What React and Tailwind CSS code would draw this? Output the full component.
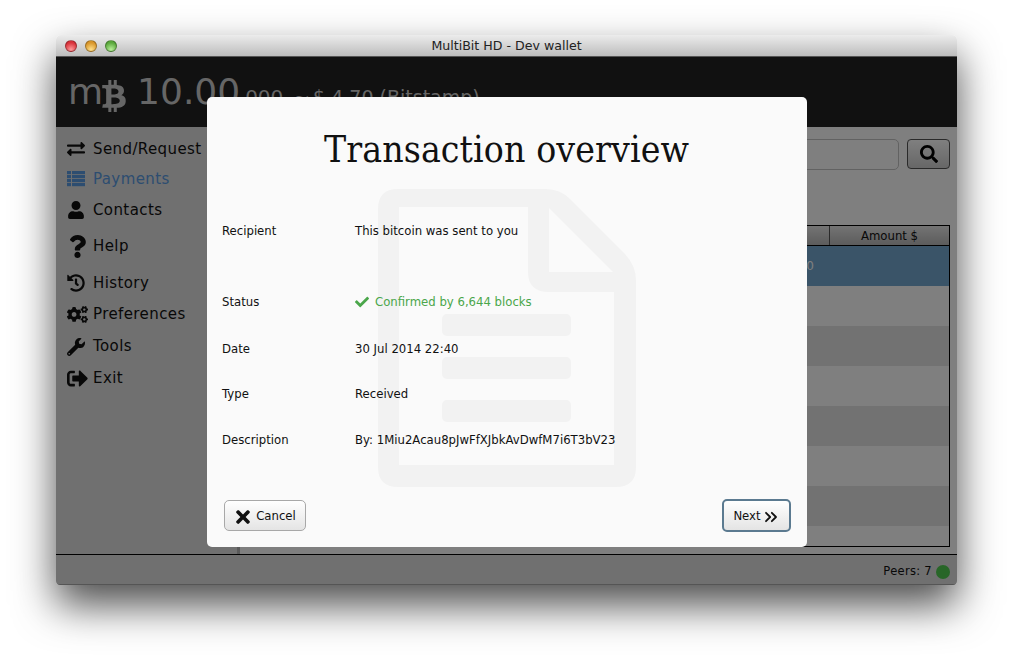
import React from 'react';
import {
  FaBtc,
  FaCheck,
  FaCogs,
  FaExchangeAlt,
  FaHistory,
  FaQuestion,
  FaSearch,
  FaSignOutAlt,
  FaTimes,
  FaUser,
  FaWrench,
} from 'react-icons/fa';
import { ChevronsRight } from 'lucide-react';

const ui = "font-['DejaVu_Sans',sans-serif]";

function PaymentsIcon() {
  return (
    <svg width="18" height="16" viewBox="0 0 18 16" fill="currentColor">
      {[0, 4, 8, 12].map((y) => (
        <g key={y}>
          <rect x="0" y={y} width="4" height="3.2" />
          <rect x="5" y={y} width="13" height="3.2" />
        </g>
      ))}
    </svg>
  );
}

const navItems = [
  { label: 'Send/Request', icon: <FaExchangeAlt size={18} />, rowClass: 'h-[30px]' },
  { label: 'Payments', icon: <PaymentsIcon />, rowClass: 'h-[30px] text-[#5a9be0]' },
  { label: 'Contacts', icon: <FaUser size={18} />, rowClass: 'h-[32px]' },
  { label: 'Help', icon: <FaQuestion size={23} className="-ml-[1px]" />, rowClass: 'h-[41px]' },
  { label: 'History', icon: <FaHistory size={18} />, rowClass: 'h-[32px]' },
  { label: 'Preferences', icon: <FaCogs size={21} />, rowClass: 'h-[31px]' },
  { label: 'Tools', icon: <FaWrench size={18} />, rowClass: 'h-[33px]' },
  { label: 'Exit', icon: <FaSignOutAlt size={21} />, rowClass: 'h-[31px]' },
];

const details = [
  { label: 'Recipient', value: 'This bitcoin was sent to you', rowClass: 'h-[71px]' },
  { label: 'Status', value: 'Confirmed by 6,644 blocks', rowClass: 'h-[47px]', status: true },
  { label: 'Date', value: '30 Jul 2014 22:40', rowClass: 'h-[45px]' },
  { label: 'Type', value: 'Received', rowClass: 'h-[46px]' },
  { label: 'Description', value: 'By: 1Miu2Acau8pJwFfXJbkAvDwfM7i6T3bV23', rowClass: 'h-[20px]' },
];

function Light({ className }) {
  return <div className={`w-3 h-3 rounded-full border border-black/30 ${className}`} />;
}

function Sidebar() {
  return (
    <div className="w-[184px] shrink-0 bg-[#e0e0e0] border-r-[3px] border-[#b4b4b4] pt-[7px] pl-[11px]">
      {navItems.map(({ label, icon, rowClass }) => (
        <div key={label} className={`flex items-center text-[15px] tracking-[0.4px] ${rowClass}`}>
          <div className="w-[26px] flex justify-start">{icon}</div>
          <span>{label}</span>
        </div>
      ))}
    </div>
  );
}

function PaymentsPanel() {
  return (
    <div className="flex-1 min-w-0 pl-[12px] pr-[7px] pt-[12px] bg-white">
      <div className="flex justify-end gap-2">
        <div className="w-[400px] h-[31px] rounded-[5px] border border-[#c4c4c4] bg-white" />
        <div className="w-[43px] h-[30px] rounded-[4px] border border-[#555] bg-gradient-to-b from-[#fff] to-[#cfcfcf] flex items-center justify-center">
          <FaSearch size={18} className="text-black" />
        </div>
      </div>
      <div className="mt-[55px] h-[322px] border border-black overflow-hidden">
        <div className="h-[20px] flex justify-end border-b border-black bg-gradient-to-b from-[#e8e8e8] to-[#b8b8b8] text-[11.7px]">
          <div className="w-[120px] border-l border-[#555] pt-[2px] flex items-center justify-center">Amount $</div>
        </div>
        <div className="h-[40px] bg-[#74a8d0] flex items-center justify-end pr-[135px] text-[12px] text-white">4.70</div>
        {[0, 1, 2, 3, 4, 5].map((i) => (
          <div key={i} className={i % 2 === 0 ? 'h-[40px] bg-white' : 'h-[40px] bg-[#e4e4e4]'} />
        ))}
      </div>
    </div>
  );
}

function Watermark() {
  return (
    <svg
      className="absolute left-[171px] top-[92px]"
      width="258"
      height="298"
      viewBox="0 0 258 298"
      fill="#f2f2f2"
    >
      <path
        fillRule="evenodd"
        d="M20 0H168Q182 0 192 10L246 64Q258 76 258 92V278Q258 298 238 298H20Q0 298 0 278V20Q0 0 20 0ZM21 18V276H236V103H171Q150 103 150 83V18ZM171 19V83H235Z"
      />
      <rect x="64" y="125" width="129" height="22" rx="5" />
      <rect x="64" y="168" width="129" height="22" rx="5" />
      <rect x="64" y="211" width="129" height="22" rx="5" />
    </svg>
  );
}

function OverviewModal() {
  return (
    <div className="relative w-[600px] h-[450px] bg-[#fafafa] rounded-[5px] overflow-hidden flex flex-col">
      <Watermark />
      <h1 className="relative mt-[27px] h-[51px] text-center text-[37px] tracking-[0.1px] leading-[51px] text-[#111] font-['DejaVu_Serif_Condensed','DejaVu_Serif',serif]">
        Transaction overview
      </h1>
      <div className="relative mt-[46px] pl-[15.5px] text-[11.7px] text-[#111]">
        {details.map(({ label, value, rowClass, status }) => (
          <div key={label} className={`flex items-start ${rowClass}`}>
            <div className="w-[133px] leading-[20px]">{label}</div>
            {status ? (
              <div className="flex items-center gap-[6px] leading-[20px] text-[#4aa64a]">
                <FaCheck size={14} />
                <span>{value}</span>
              </div>
            ) : (
              <div className="leading-[20px]">{value}</div>
            )}
          </div>
        ))}
      </div>
      <div className="relative mt-auto mb-[15px] pl-[17px] pr-[16px] flex items-center justify-between text-[11.7px] text-[#111]">
        <button className="w-[82px] h-[31px] pt-[2px] flex items-center justify-center gap-[3px] rounded-[5px] border border-[#a8a8a8] bg-gradient-to-b from-white to-[#e4e4e4]">
          <FaTimes size={20} />
          Cancel
        </button>
        <button className="w-[69px] h-[33px] pt-[2px] flex items-center justify-center rounded-[5px] border-2 border-[#5b7a90] bg-gradient-to-b from-white to-[#e4e4e4]">
          Next
          <ChevronsRight size={20} strokeWidth={2.2} className="-mr-[2px]" />
        </button>
      </div>
    </div>
  );
}

export default function App() {
  return (
    <div className={`w-[1014px] h-[664px] bg-white pt-[35px] pl-[56px] overflow-hidden ${ui}`}>
      <div className="relative w-[901px] h-[550px] rounded-t-[5px] rounded-b-[4px] flex flex-col shadow-[0_20px_42px_rgba(0,0,0,0.7)]">
        <div className="relative h-[22px] shrink-0 pt-[1px] rounded-t-[5px] bg-gradient-to-b from-[#ececec] to-[#bdbdbd] border-b border-[#555] flex items-center justify-center text-[12.6px] text-[#222]">
          <div className="absolute left-[9px] top-[5px] flex gap-2">
            <Light className="bg-[radial-gradient(circle_at_50%_85%,#ff9a9a,#d8323a_70%)]" />
            <Light className="bg-[radial-gradient(circle_at_50%_85%,#ffe08a,#d8962a_70%)]" />
            <Light className="bg-[radial-gradient(circle_at_50%_85%,#b8f09a,#5aa83c_70%)]" />
          </div>
          MultiBit HD - Dev wallet
        </div>

        <div className="relative flex-1 min-h-0 flex flex-col rounded-b-[4px] overflow-hidden">
          <div className="h-[70px] shrink-0 bg-[#222] text-[#ccc] flex items-baseline pl-[12px] pt-[10px]">
            <span className="text-[36px] leading-[50px]">m</span>
            <FaBtc size={32} className="self-center -ml-[5px] -mt-[3px]" />
            <span className="ml-[7px] text-[36px] leading-[50px]">10.00</span>
            <span className="ml-[5px] text-[20px]">000</span>
            <span className="ml-[10px] text-[20px]">~</span>
            <span className="ml-[3px] text-[19px]">$ 4.70 (Bitstamp)</span>
          </div>

          <div className="flex-1 min-h-0 flex border-b border-black bg-white text-[#111]">
            <Sidebar />
            <PaymentsPanel />
          </div>

          <div className="h-[30px] shrink-0 bg-[#e0e0e0] border-b border-[#aaa] flex items-center justify-end gap-[4px] pr-[7px] pt-[4px] text-[11.5px] tracking-[0.3px] text-[#111]">
            <span>Peers: 7</span>
            <div className="w-[14px] h-[14px] rounded-full bg-[#50cc50]" />
          </div>

          <div className="absolute inset-0 bg-black/50 flex justify-center items-start pt-[40px]">
            <OverviewModal />
          </div>
        </div>
      </div>
    </div>
  );
}
